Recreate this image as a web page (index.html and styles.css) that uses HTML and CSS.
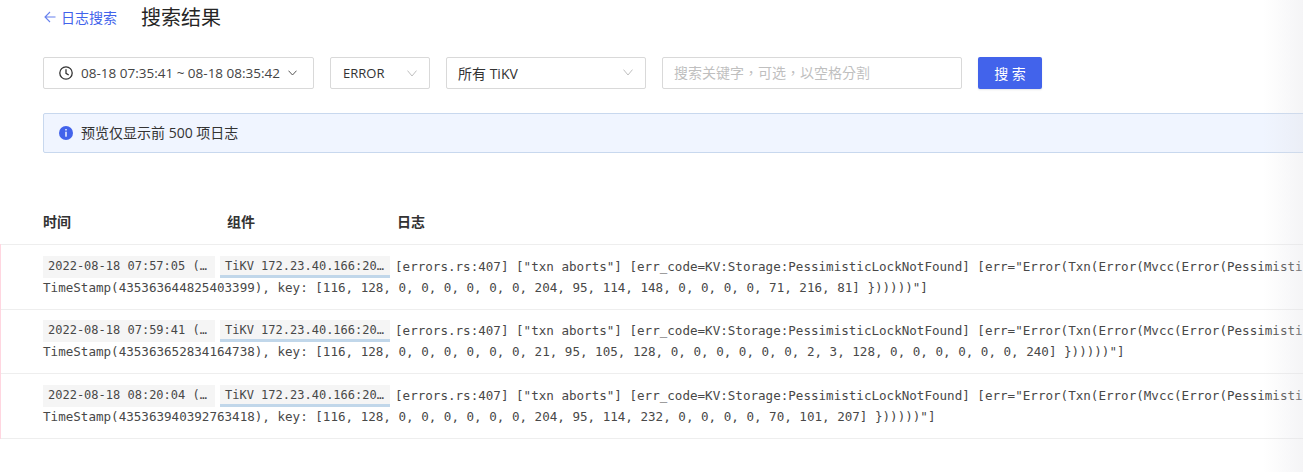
FILE: index.html
```html
<!DOCTYPE html>
<html lang="zh">
<head>
<meta charset="utf-8">
<title>搜索结果</title>
<link rel="stylesheet" href="styles.css">
</head>
<body>
<div class="page">
  <header class="head">
    <a class="back">
      <svg class="back-icon" viewBox="0 0 12 12" width="12" height="12"><path d="M11.5 6H1M6 1 1 6l5 5" fill="none" stroke="currentColor" stroke-width="1.1"/></svg>
      日志搜索
    </a>
    <h1 class="title">搜索结果</h1>
  </header>
  <div class="filters">
    <div class="box date">
      <svg class="clock" viewBox="0 0 14 14" width="14" height="14"><circle cx="7" cy="7" r="6.2" fill="none" stroke="#333" stroke-width="1.3"/><path d="M7 3.2V7.3L9.7 9" fill="none" stroke="#333" stroke-width="1.3"/></svg>
      <span class="date-text">08-18 07:35:41 ~ 08-18 08:35:42</span>
      <svg class="chev dark" viewBox="0 0 9 6" width="9" height="6"><path d="M.5.7 4.5 5 8.5.7" fill="none" stroke="#555" stroke-width="1"/></svg>
    </div>
    <div class="box select level">
      <span>ERROR</span>
      <svg class="chev" viewBox="0 0 10 7" width="10" height="7"><path d="M.5.6 5 6 9.5.6" fill="none" stroke="#bfbfbf" stroke-width="1"/></svg>
    </div>
    <div class="box select tikv">
      <span>所有 TiKV</span>
      <svg class="chev" viewBox="0 0 10 7" width="10" height="7"><path d="M.5.6 5 6 9.5.6" fill="none" stroke="#bfbfbf" stroke-width="1"/></svg>
    </div>
    <div class="box search" lang="zh-Hant">搜索关键字，可选，以空格分割</div>
    <button class="btn">搜 索</button>
  </div>
  <div class="alert">
    <svg class="info" viewBox="0 0 14 14" width="14" height="14"><circle cx="7" cy="7" r="7" fill="#4263eb"/><rect x="6.3" y="3" width="1.4" height="1.5" fill="#fff"/><rect x="6.3" y="5.7" width="1.4" height="5" fill="#fff"/></svg>
    <span class="alert-text">预览仅显示前 500 项日志</span>
  </div>
  <div class="cols">
    <div class="col c-time">时间</div>
    <div class="col c-comp">组件</div>
    <div class="col">日志</div>
  </div>
  <div class="rows">
    <div class="row">
      <div class="line"><span class="tag t-time">2022-08-18 07:57:05 (…</span><span class="tag t-comp">TiKV 172.23.40.166:20…</span><span class="msg">[errors.rs:407] ["txn aborts"] [err_code=KV:Storage:PessimisticLockNotFound] [err="Error(Txn(Error(Mvcc(Error(PessimisticLockNotFound { start_ts:</span></div>
      <div class="line">TimeStamp(435363644825403399), key: [116, 128, 0, 0, 0, 0, 0, 0, 204, 95, 114, 148, 0, 0, 0, 0, 71, 216, 81] })))))"]</div>
    </div>
    <div class="row">
      <div class="line"><span class="tag t-time">2022-08-18 07:59:41 (…</span><span class="tag t-comp">TiKV 172.23.40.166:20…</span><span class="msg">[errors.rs:407] ["txn aborts"] [err_code=KV:Storage:PessimisticLockNotFound] [err="Error(Txn(Error(Mvcc(Error(PessimisticLockNotFound { start_ts:</span></div>
      <div class="line">TimeStamp(435363652834164738), key: [116, 128, 0, 0, 0, 0, 0, 0, 21, 95, 105, 128, 0, 0, 0, 0, 0, 0, 2, 3, 128, 0, 0, 0, 0, 0, 0, 240] })))))"]</div>
    </div>
    <div class="row">
      <div class="line"><span class="tag t-time">2022-08-18 08:20:04 (…</span><span class="tag t-comp">TiKV 172.23.40.166:20…</span><span class="msg">[errors.rs:407] ["txn aborts"] [err_code=KV:Storage:PessimisticLockNotFound] [err="Error(Txn(Error(Mvcc(Error(PessimisticLockNotFound { start_ts:</span></div>
      <div class="line">TimeStamp(435363940392763418), key: [116, 128, 0, 0, 0, 0, 0, 0, 204, 95, 114, 232, 0, 0, 0, 0, 70, 101, 207] })))))"]</div>
    </div>
  </div>
  <div class="edge-shadow"></div>
</div>
</body>
</html>
```
FILE: styles.css
```css
* { box-sizing: border-box; }
html, body { margin: 0; height: 100%; background: #fff; }
body { font-family: "Open Sans", "Noto Sans CJK SC", sans-serif; font-size: 14px; color: #333; overflow: hidden; }
.page { position: relative; width: 1303px; height: 472px; overflow: hidden; }
.head { display: flex; align-items: center; height: 34px; padding-bottom: 1px; padding-left: 44px; }
.back { display: flex; align-items: center; gap: 5px; width: 97px; color: #4263eb; font-size: 14px; }
.back-icon { opacity: .8; }
.title { margin: 0; font-size: 20px; font-weight: 400; color: #262626; }
.filters { display: flex; gap: 16px; margin: 23px 0 0 43px; }
.box { height: 32px; border: 1px solid #d9d9d9; border-radius: 2px; display: flex; align-items: center; background: #fff; }
.date { width: 271px; padding-left: 15px; }
.date-text { margin-left: 8px; font-size: 13.5px; color: #444; }
.clock { flex: none; }
.chev.dark { margin-left: 8px; }
.select { justify-content: space-between; padding: 0 12px 0 11px; }
.level { width: 100px; font-size: 13px; padding-left: 12px; }
.tikv { width: 200px; padding-bottom: 1px; }
.search { width: 300px; padding-left: 11px; padding-bottom: 2px; color: #bfbfbf; font-family: "Noto Sans CJK TC", sans-serif; }
.btn { width: 64px; height: 32px; border: 0; border-radius: 2px; background: #4263eb; color: #fff; font: inherit; padding: 0 0 1px; box-shadow: 0 1px 2px rgba(0,0,0,.1); }
.alert { display: flex; align-items: center; gap: 8px; height: 40px; width: 1300px; margin: 24px 0 0 43px; padding-left: 15px; background: #f0f5ff; border: 1px solid #c8d8ee; border-radius: 2px; }
.alert-text { margin-top: -2px; }
.cols { display: flex; margin: 59px 0 0 43px; height: 20px; font-weight: 700; font-size: 14px; color: #333; line-height: 20px; }
.col { flex: none; }
.c-time { width: 184px; }
.c-comp { width: 170px; }
.rows { margin-top: 12.4px; border-left: 1px solid #ffd6e0; }
.row { height: 64.5px; padding: 10.5px 0 0 42px; border-top: 1px solid #eeeeee; font-family: "DejaVu Sans Mono", monospace; font-size: 12.57px; color: #484848; }
.row:last-child { height: 65.5px; border-bottom: 1px solid #eeeeee; }
.line { height: 21px; line-height: 21px; white-space: nowrap; }
.tag { display: inline-block; height: 22px; line-height: 20px; padding: 0 5px; background: #f5f5f5; vertical-align: top; font-size: 12px; }
.t-time { width: 172px; margin-right: 5px; }
.t-comp { width: 170px; margin-right: 5px; border-bottom: 3px solid #c1d7ea; }
.edge-shadow { position: absolute; top: 0; right: 0; width: 40px; height: 100%; background: linear-gradient(to right, rgba(225,225,230,0), rgba(225,225,230,.35)); pointer-events: none; }
```
